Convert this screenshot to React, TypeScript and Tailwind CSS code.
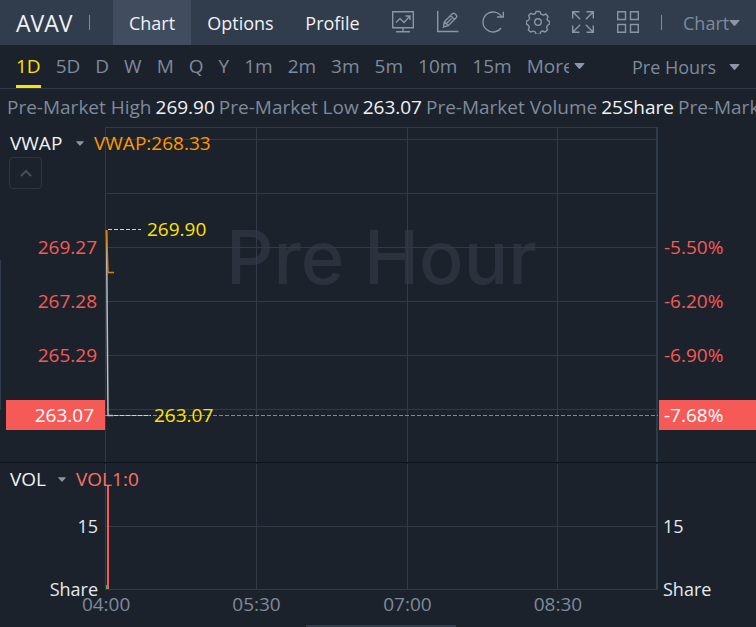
import React, { useState } from "react";

const periods = ["1D", "5D", "D", "W", "M", "Q", "Y", "1m", "2m", "3m", "5m", "10m", "15m"];
const columns = ["27.4%", "54.7%", "81.9%"];
const times = [
  { label: "04:00", x: "0.2%" },
  { label: "05:30", x: "27.4%" },
  { label: "07:00", x: "54.7%" },
  { label: "08:30", x: "81.9%" },
];

function Caret({ small = false }: { small?: boolean }) {
  return (
    <svg viewBox="0 0 12 7" className={small ? "h-[5px] w-2 shrink-0" : "h-1.5 w-[11px] shrink-0"} fill="currentColor" aria-hidden="true">
      <path d="M.6 0h10.8Q12 .6 11.4 1.200L7 6.300q-1 1-2 0L.6 1.200Q0 .6.6 0Z" />
    </svg>
  );
}

function Picker({ label, value, width, gap, small }: { label: string; value: string; width: string; gap: string; small?: boolean }) {
  return (
    <label className={`flex items-center ${gap}`}>
      <select aria-label={label} className={`appearance-none overflow-hidden bg-transparent outline-none ${width}`}>
        <option>{value}</option>
      </select>
      <span className="text-[#8b96a8]">
        <Caret small={small} />
      </span>
    </label>
  );
}

function Tool({ label, children }: { label: string; children: React.ReactNode }) {
  return (
    <button aria-label={label} className="shrink-0">
      <svg viewBox="0 0 24 24" className="size-6" fill="none" stroke="currentColor" strokeWidth="1.4">
        {children}
      </svg>
    </button>
  );
}

function Header() {
  return (
    <header className="flex h-[45px] items-center bg-[#313c4c] text-[18px] text-[#f0f2f5]">
      <h1 className="ml-4 w-[59px] text-[23px]">AVAV</h1>
      <span className="ml-3.5 h-[15px] w-px bg-[#7e899b]" />
      <nav className="ml-[23px] flex h-full">
        <button className="h-full w-[78px] bg-[#414d5f]">Chart</button>
        <button className="w-[99px]">Options</button>
        <button className="w-[85px]">Profile</button>
      </nav>
      <div className="ml-auto flex items-center gap-[21px] pb-0.5 text-[#8a95a6]">
        <Tool label="Indicators">
          <path d="M1.700 1.700h20.600v16H1.700zM12 17.700v4M5 21.700h14M5 12.500l4-4 4 4 5.500-6M14.500 6h4.500v4" />
        </Tool>
        <Tool label="Draw">
          <path d="M1.700 1v20.500H22.500M7.500 17l.8-5.200 8-8q1.300-1.300 2.600 0l1.300 1.300q1.300 1.300 0 2.600l-8 8L7.500 17ZM8.300 11.800l3.900 3.900M14.500 5.600l3.900 3.900M10.500 13.500l5-5" />
        </Tool>
        <Tool label="Refresh">
          <path d="M20 18a10 10 0 1 1 .7-11M22.300 1.700V7H16" />
        </Tool>
        <Tool label="Settings">
          <circle cx="12" cy="12" r="3.300" />
          <path d="m10 1.500h4l1 2.700 2.300 1 2.600-1.200 2.100 2.500-1 2.700.9 1.500 1.600.8v2.700l-2.200 1.300-.6 2 .8 2.300-2.400 2.200-2.500-1-1.900.9-1 2.600h-3.400l-1.200-2.600-2-.8-2.500 1-2.300-2.300 1-2.500-.8-1.900-2-1.200v-3l2.300-1.200.8-1.900-1-2.500 2.300-2.300 2.400 1.100 2.100-.9Z" strokeLinejoin="round" />
        </Tool>
        <Tool label="Full screen">
          <path d="M1.700 8.500V1.700h6.800M1.700 1.700l7.500 7.500M15.500 1.700h6.800v6.800M22.300 1.700l-7.500 7.500M1.700 15.500v6.800h6.800M1.700 22.300l7.500-7.500M22.300 15.500v6.800h-6.800M22.300 22.300l-7.500-7.500" />
        </Tool>
        <Tool label="Layout">
          <path d="M1.700 1.700h7.800v7.800H1.700zM14.500 1.700h7.800v7.800h-7.800zM1.700 14.500h7.800v7.800H1.700zM14.500 14.500h7.800v7.800h-7.800z" />
        </Tool>
      </div>
      <span className="ml-[21px] h-[15px] w-px bg-[#7e899b]" />
      <div className="mr-4 ml-[21px] text-[#7f8a9c]">
        <Picker label="Chart style" value="Chart" width="w-[46px]" gap="gap-0" />
      </div>
    </header>
  );
}

function PeriodBar() {
  const [active, setActive] = useState("1D");
  return (
    <div className="flex h-11 items-center justify-between border-b border-[#303b49] px-4 text-[#7f8a9c]">
      <div className="flex h-full items-center gap-[15px]">
        {periods.map((p) => (
          <button
            key={p}
            onClick={() => setActive(p)}
            className={`h-full border-b-3 pt-0.5 ${p === active ? "border-[#ffe100] text-[#ffe100]" : "border-transparent"}`}
          >
            {p}
          </button>
        ))}
        <div className="pb-0.5">
          <Picker label="More periods" value="More" width="w-[42px]" gap="gap-[5px]" />
        </div>
      </div>
      <div className="text-[18px]">
        <Picker label="Session" value="Pre Hours" width="w-[85px]" gap="gap-3" />
      </div>
    </div>
  );
}

function Stats() {
  const stats = [
    ["Pre-Market High", "269.90"],
    ["Pre-Market Low", "263.07"],
    ["Pre-Market Volume", "25Share"],
    ["Pre-Market Turnover", "6.66K"],
  ];
  return (
    <div className="flex h-[38px] items-center gap-1 overflow-hidden pb-0.5 pl-[7px] whitespace-nowrap">
      {stats.map(([name, value]) => (
        <p key={name} className="flex shrink-0 gap-1 text-[#7f8a9c]">
          {name} <span className="text-[#f0f2f5]">{value}</span>
        </p>
      ))}
    </div>
  );
}

function PricePanel() {
  return (
    <section className="relative grid h-[336px] grid-cols-[105px_1fr_98px] border-b border-[#0c1218]">
      <div className="pt-[93px] text-right text-[#f55a57]">
        {["269.27", "267.28", "265.29"].map((v) => (
          <div key={v} className="flex h-[54px] items-center justify-end pr-2">{v}</div>
        ))}
        <div className="mt-[18px] ml-1.5 flex h-[30px] items-center justify-end bg-[#f55a57] pr-[11px] text-white">263.07</div>
      </div>
      <div className="relative">
        <div className="absolute inset-x-0 top-[86px] text-center font-[Inter,sans-serif] text-[74px] leading-[88px] font-medium whitespace-nowrap text-[#2b323d]">
          Pre Hour
        </div>
        <svg className="absolute inset-0 size-full" shapeRendering="crispEdges">
          <g stroke="#303b47">
            {[0.5, 12.5, 66.5, 120.5, 174.5, 228.5, 282.5].map((y) => (
              <line key={y} x1="0" x2="100%" y1={y} y2={y} />
            ))}
            <line x1="0.5" x2="0.5" y1="0" y2="100%" />
            {columns.map((x) => (
              <line key={x} x1={x} x2={x} y1="0" y2="100%" />
            ))}
          </g>
          <rect x="100%" width="2" height="100%" fill="#303b49" transform="translate(-2 0)" />
          <line x1="0" x2="100%" y1="288.500" y2="288.500" stroke="#f55a57" strokeDasharray="4 2" />
          <path d="M3 102.500h33M3 288.500h43" stroke="#ffe100" strokeDasharray="4 2" />
          <g fill="none" shapeRendering="auto">
            <path d="M1.500 103L3 288.500h5" stroke="#b9bec4" strokeWidth="1.500" />
            <path d="M1.500 103L3 145.500h6" stroke="#d98206" strokeWidth="1.500" />
          </g>
          <g fill="#ffe100">
            <text x="42" y="109">269.90</text>
            <text x="49" y="295">263.07</text>
          </g>
        </svg>
      </div>
      <div className="pt-[93px] text-[#f55a57]">
        {["-5.50%", "-6.20%", "-6.90%"].map((v) => (
          <div key={v} className="flex h-[54px] items-center pl-1.5">{v}</div>
        ))}
        <div className="mt-[18px] ml-px flex h-[30px] items-center bg-[#f55a57] pl-[5px] text-white">-7.68%</div>
      </div>
      <div className="absolute top-0 left-0 pl-[9px] text-[#f0f2f5]">
        <div className="flex h-[30px] items-center gap-2.5 pt-0.5 pl-px">
          <Picker label="Price indicator" value="VWAP" width="w-[56px]" gap="gap-2.5" small />
          <span className="text-[#ff9800]">VWAP:268.33</span>
        </div>
        <button aria-label="Collapse" className="flex h-8 w-[33px] items-center justify-center rounded-sm border border-[#2c3642] text-[#454e5b]">
          <svg viewBox="0 0 12 8" className="h-2 w-3" fill="none" stroke="currentColor" strokeWidth="2">
            <path d="m1 7 5-5 5 5" />
          </svg>
        </button>
      </div>
    </section>
  );
}

function VolumePanel() {
  return (
    <section className="relative grid h-[164px] grid-cols-[105px_1fr_98px] text-[#e6e9ed]">
      <div className="pt-12 pr-[7px] text-right text-[18px]">
        <div className="flex h-[30px] items-center justify-end">15</div>
        <div className="mt-[33px] flex h-[30px] items-center justify-end">Share</div>
      </div>
      <svg className="h-full w-full overflow-visible">
        <g stroke="#303b47" shapeRendering="crispEdges">
          <line x1="0" x2="100%" y1="63.500" y2="63.500" />
          <line x1="0" x2="100%" y1="126.500" y2="126.500" />
          <line x1="0.5" x2="0.5" y1="1" y2="127" />
          {columns.map((x) => (
            <line key={x} x1={x} x2={x} y1="1" y2="127" />
          ))}
        </g>
        <rect x="100%" y="1" width="2" height="126" fill="#303b49" transform="translate(-2 0)" />
        <rect x="1" y="122" width="2" height="4" fill="#1fb36b" />
        <rect x="2" y="22" width="2" height="104" fill="#f55a57" />
        <g fill="#7f8a9c" textAnchor="middle">
          {times.map((t) => (
            <text key={t.label} x={t.x} y="148">{t.label}</text>
          ))}
        </g>
      </svg>
      <div className="pt-12 pl-[5px] text-[18px]">
        <div className="flex h-[30px] items-center">15</div>
        <div className="mt-[33px] flex h-[30px] items-center">Share</div>
      </div>
      <div className="absolute top-0 left-0 flex h-8 items-center gap-2.5 pl-2.5 text-[#f0f2f5]">
        <Picker label="Volume indicator" value="VOL" width="w-[38px]" gap="gap-2.5" small />
        <span className="text-[#fb7063]">VOL1:0</span>
      </div>
    </section>
  );
}

export default function App() {
  return (
    <main className="relative min-h-screen overflow-hidden bg-[#1b222b] font-['Open_Sans','Noto_Sans',sans-serif] text-[19px] leading-6">
      <Header />
      <PeriodBar />
      <Stats />
      <PricePanel />
      <VolumePanel />
      <div className="absolute top-[260px] left-0 h-[150px] w-px bg-[#313c4c]" />
      <div className="absolute bottom-0 left-1/2 h-0.5 w-[150px] -translate-x-[72px] bg-[#313c4c]" />
    </main>
  );
}
